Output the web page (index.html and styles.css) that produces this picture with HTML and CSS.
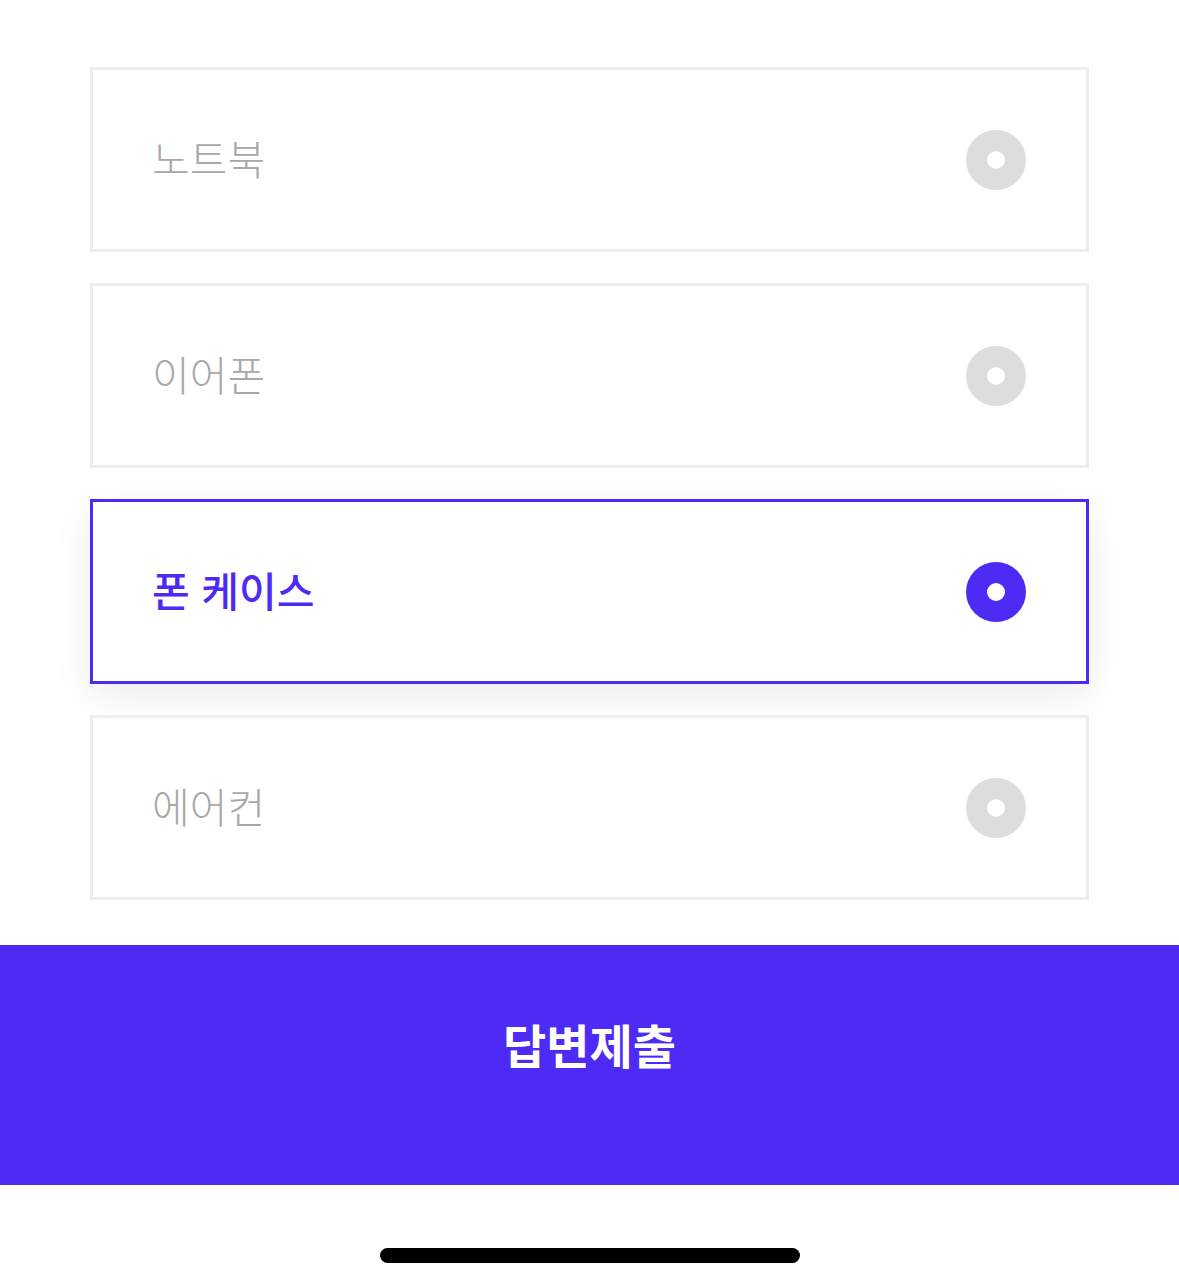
FILE: index.html
```html
<!DOCTYPE html>
<html lang="ko">
<head>
    <link rel="stylesheet" href="styles.css">
    <meta charset="UTF-8">
    <meta name="viewport" content="width=device-width, initial-scale=1.0">
    <title>답변 선택</title>
</head>
<body>
    <ul class="options">
        <li class="option">
            <span class="option-label">노트북</span>
            <span class="radio"></span>
        </li>
        <li class="option">
            <span class="option-label">이어폰</span>
            <span class="radio"></span>
        </li>
        <li class="option selected">
            <span class="option-label">폰 케이스</span>
            <span class="radio"></span>
        </li>
        <li class="option">
            <span class="option-label">에어컨</span>
            <span class="radio"></span>
        </li>
    </ul>

    <button class="submit" type="button">답변제출</button>

    <div class="home-bar"></div>
</body>
</html>
```

FILE: styles.css
```css
body {
    font-family: "Noto Sans CJK KR", "Noto Sans", sans-serif;
    background-color: #ffffff;
    margin: 0;
    padding: 0;
}

.options {
    list-style: none;
    margin: 0;
    padding: 67px 90px 0;
    display: flex;
    flex-direction: column;
    gap: 31px;
}

.option {
    height: 185px;
    box-sizing: border-box;
    border: 3px solid #ededed;
    background-color: #ffffff;
    display: flex;
    align-items: center;
    justify-content: space-between;
    padding: 0 60px 0 59px;
}

.option-label {
    font-size: 41px;
    font-weight: 300;
    color: #a8a8a8;
    line-height: 1;
    letter-spacing: 0;
    padding-bottom: 4px;
}

.radio {
    width: 60px;
    height: 60px;
    border-radius: 50%;
    background-color: #dddddd;
    display: flex;
    align-items: center;
    justify-content: center;
}

.radio::after {
    content: "";
    width: 18px;
    height: 18px;
    border-radius: 50%;
    background-color: #ffffff;
}

.option.selected {
    border-color: #4d2bf4;
    box-shadow: 0 12px 36px rgba(0, 0, 0, 0.08);
}

.option.selected .option-label {
    color: #4d2bf4;
    font-weight: 500;
}

.option.selected .radio {
    background-color: #4d2bf4;
}

.submit {
    width: 100%;
    height: 240px;
    margin-top: 45px;
    border: none;
    background-color: #4e2bf5;
    color: #ffffff;
    font-family: inherit;
    font-size: 47px;
    font-weight: 700;
    line-height: 1;
    letter-spacing: 0;
    padding: 75px 0 0;
    display: flex;
    justify-content: center;
    align-items: flex-start;
}

.home-bar {
    width: 420px;
    height: 15px;
    border-radius: 8px;
    background-color: #000000;
    margin: 63px auto 0;
}
```
